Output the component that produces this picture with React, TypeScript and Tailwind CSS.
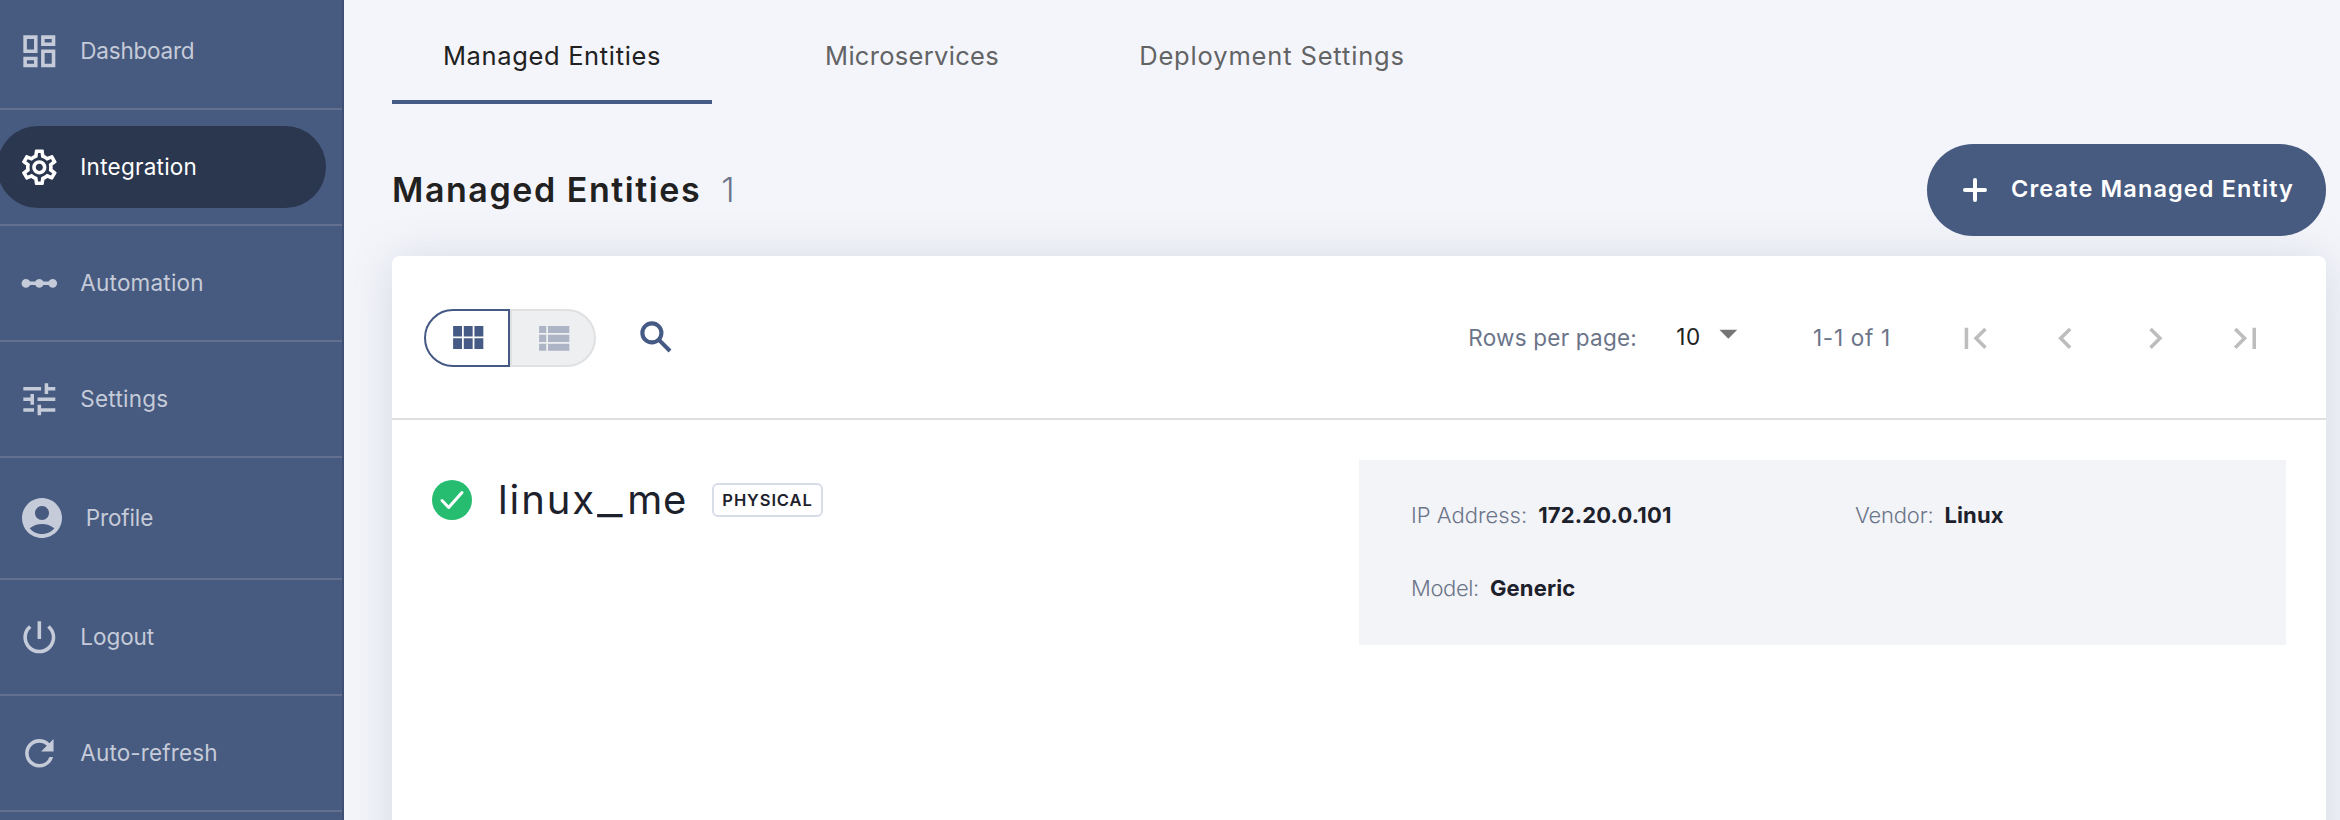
import React from 'react';
import {
  MdAccountCircle,
  MdArrowDropDown,
  MdChevronLeft,
  MdChevronRight,
  MdFirstPage,
  MdLastPage,
  MdLinearScale,
  MdOutlineDashboard,
  MdOutlineSettings,
  MdPowerSettingsNew,
  MdRefresh,
  MdTune,
} from 'react-icons/md';

type NavItem = {
  label: string;
  icon: React.ComponentType<{ className?: string }>;
  tracking: string;
  active?: boolean;
  large?: boolean;
};

const navItems: NavItem[] = [
  { label: 'Dashboard', icon: MdOutlineDashboard, tracking: 'tracking-[-0.22px]' },
  { label: 'Integration', icon: MdOutlineSettings, tracking: 'tracking-[0.25px]', active: true },
  { label: 'Automation', icon: MdLinearScale, tracking: 'tracking-[0.2px]' },
  { label: 'Settings', icon: MdTune, tracking: 'tracking-[0.25px]' },
  { label: 'Profile', icon: MdAccountCircle, tracking: 'tracking-[-0.11px]', large: true },
  { label: 'Logout', icon: MdPowerSettingsNew, tracking: 'tracking-[-0.05px]' },
  { label: 'Auto-refresh', icon: MdRefresh, tracking: 'tracking-[0.13px]' },
];

function Sidebar() {
  return (
    <nav className="flex h-full w-[344px] shrink-0 flex-col overflow-hidden border-r-2 border-[#3f4f75] bg-[#475a7f]">
      <ul className="-mt-1.5 flex flex-col">
        {navItems.map(({ label, icon: Icon, tracking, active, large }) => (
          <li
            key={label}
            className={`flex shrink-0 items-center border-b-2 border-[#637090] ${large ? 'h-[122px]' : 'h-[116px]'}`}
          >
            <a
              className={`-ml-[3px] flex h-[82px] w-[329px] items-center rounded-full pl-[20.67px] text-[22.5px] ${
                active ? 'bg-[#2b364f] text-white' : 'text-[#c5cbd9]'
              }`}
            >
              <Icon className={large ? 'size-12' : 'size-[42.67px]'} />
              <span className={`ml-5 ${tracking}`}>{label}</span>
            </a>
          </li>
        ))}
      </ul>
    </nav>
  );
}

function Tabs() {
  return (
    <div className="flex gap-10 text-[25.5px] text-[#626365]">
      <div className="flex h-[104px] w-80 items-center justify-center border-b-4 border-[#455a84] pt-3 tracking-[0.65px] text-[#212121]">
        Managed Entities
      </div>
      <div className="flex h-[104px] w-80 items-center justify-center border-b-4 border-transparent pt-3 tracking-[0.3px]">
        Microservices
      </div>
      <div className="flex h-[104px] w-80 items-center justify-center border-b-4 border-transparent pt-3 tracking-[0.85px]">
        Deployment Settings
      </div>
    </div>
  );
}

function PageHeader() {
  return (
    <div className="relative z-10 mt-10 flex h-[92px] items-center justify-between">
      <h1 className="flex items-center pb-0.5 text-[34px] text-[#212121]">
        <span className="font-semibold tracking-[1.55px]">Managed Entities</span>
        <span className="ml-5 font-light text-[#6b7489]">1</span>
      </h1>
      <button className="flex h-[92px] w-[399px] items-center rounded-full bg-[#475a7f] pl-9 text-white">
        <svg className="size-6" viewBox="0 0 24 24" stroke="currentColor" strokeWidth="4" strokeLinecap="round">
          <path d="M12 2v20M2 12h20" />
        </svg>
        <span className="ml-6 pb-0.5 text-[23.5px] font-semibold tracking-[1.12px] whitespace-nowrap">
          Create Managed Entity
        </span>
      </button>
    </div>
  );
}

function Toolbar() {
  return (
    <div className="flex h-[164px] items-center border-b-2 border-[#dfdfdf] pl-8">
      <div className="flex pt-0.5">
        <button className="flex h-[58px] w-[86px] items-center justify-center rounded-l-full border-2 border-[#455a84] text-[#455a84]">
          <svg className="size-[42.67px]" viewBox="0 0 24 24" fill="currentColor">
            <path d="M4 11h5V5H4v6zm0 7h5v-6H4v6zm6 0h5v-6h-5v6zm6 0h5v-6h-5v6zm-6-7h5V5h-5v6zm6-6v6h5V5h-5z" />
          </svg>
        </button>
        <button className="flex h-[58px] w-[86px] items-center justify-center rounded-r-full border-2 border-[#e0e1e3] bg-[#eeeff1] text-[#acb4c5]">
          <svg className="size-[42.67px]" viewBox="0 0 24 24" fill="currentColor">
            <path d="M4 14h4v-4H4v4zm0 5h4v-4H4v4zM4 9h4V5H4v4zm5 5h12v-4H9v4zm0 5h12v-4H9v4zM9 5v4h12V5H9z" />
          </svg>
        </button>
      </div>
      <svg className="ml-[38.67px] size-[42.67px] text-[#455a84]" viewBox="0 0 24 24" fill="none">
        <circle cx="9.5" cy="9.5" r="5.35" stroke="currentColor" strokeWidth="2.3" />
        <path d="M13.6 13.6l6.1 6.1" stroke="currentColor" strokeWidth="2.3" />
      </svg>
      <div className="ml-auto flex items-center pt-0.5 pr-9 text-[22.5px] text-[#6b7489]">
        <span className="w-[207px] tracking-[0.22px]">Rows per page:</span>
        <span className="w-8 pb-0.5 pl-px tracking-[0.6px] text-[#212121]">10</span>
        <MdArrowDropDown className="-mt-2.5 size-[42.67px] text-[#757575]" />
        <span className="ml-[63px] w-[117px] tracking-[0.7px]">1-1 of 1</span>
        <div className="flex text-[#bdbdbd]">
          {[MdFirstPage, MdChevronLeft, MdChevronRight, MdLastPage].map((Icon, index) => (
            <button key={index} className="flex w-[90px] justify-center">
              <Icon className="size-[42.67px]" />
            </button>
          ))}
        </div>
      </div>
    </div>
  );
}

function Detail({ label, value, tracking }: { label: string; value: string; tracking: string }) {
  return (
    <div className="flex h-10 items-center gap-[11px] pb-0.5 text-[22px]">
      <span className={`font-light text-[#6b7489] ${tracking}`}>{label}</span>
      <span className="font-bold tracking-[0.15px] text-[#1d212b]">{value}</span>
    </div>
  );
}

function EntityRow() {
  return (
    <div className="flex items-start justify-between pt-10 pr-10 pl-10">
      <div className="flex h-20 items-center">
        <svg className="size-10" viewBox="0 0 40 40" fill="none">
          <circle cx="20" cy="20" r="20" fill="#27bd70" />
          <path d="M10 20.5l6.7 7L30 12.5" stroke="white" strokeWidth="3" strokeLinecap="round" strokeLinejoin="round" />
        </svg>
        <span className="ml-[26px] w-[193px] text-[40px] whitespace-nowrap text-[#1d212b]">
          <span className="tracking-[1.9px]">linux</span>
          <span className="mr-3 ml-px inline-block origin-left scale-x-[1.4]">_</span>
          <span className="tracking-[0.6px]">me</span>
        </span>
        <span className="ml-[21px] flex h-[34px] w-[111px] items-center justify-center rounded-md border-2 border-[#d9dde8] text-[16.5px] font-semibold tracking-[0.9px] text-[#1d212b]">
          PHYSICAL
        </span>
      </div>
      <div className="grid w-[927px] grid-cols-[444px_1fr] gap-y-[33px] bg-[#f3f4f8] py-9 pl-[52px]">
        <Detail label="IP Address:" value="172.20.0.101" tracking="tracking-normal" />
        <Detail label="Vendor:" value="Linux" tracking="tracking-[-0.2px]" />
        <Detail label="Model:" value="Generic" tracking="tracking-[-0.38px]" />
      </div>
    </div>
  );
}

export default function App() {
  return (
    <div className="flex h-[820px] w-[2340px] overflow-hidden bg-[#f4f5fa] font-['Inter',sans-serif]">
      <Sidebar />
      <main className="flex min-w-0 flex-1 flex-col overflow-hidden pr-3.5 pl-12">
        <Tabs />
        <PageHeader />
        <section className="mt-5 h-[640px] shrink-0 rounded-lg bg-white shadow-[0_4px_48px_rgba(69,96,130,0.18)]">
          <Toolbar />
          <EntityRow />
        </section>
      </main>
    </div>
  );
}
